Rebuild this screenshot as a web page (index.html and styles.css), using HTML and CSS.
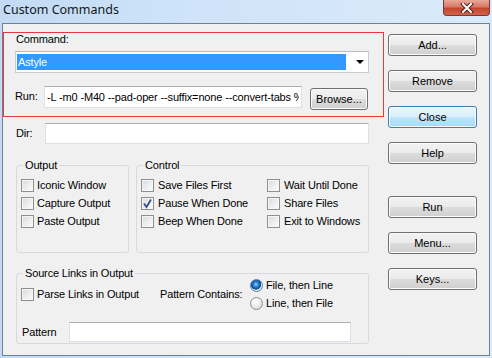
FILE: index.html
```html
<!DOCTYPE html>
<html lang="en">
<head>
    <meta charset="UTF-8">
    <title>Custom Commands</title>
    <link rel="stylesheet" href="styles.css">
</head>
<body>
    <div class="window">
        <div class="titlebar">
            <span class="title">Custom Commands</span>
            <div class="close-x">
                <svg width="16" height="10" viewBox="0 0 16 10">
                    <path d="M4 1 L12 9 M12 1 L4 9" stroke="#4a2420" stroke-width="4" stroke-linecap="square"/>
                    <path d="M4 1 L12 9 M12 1 L4 9" stroke="#ffffff" stroke-width="2" stroke-linecap="square"/>
                </svg>
            </div>
        </div>
        <div class="client">
            <div class="main">
                <div class="cmd-box">
                    <div class="label cmd-label">Command:</div>
                    <div class="combo">
                        <span class="combo-sel">Astyle</span>
                        <span class="combo-arrow"></span>
                    </div>
                    <div class="run-row">
                        <span class="label run-label">Run:</span>
                        <input class="field run-field" type="text" value="-L -m0 -M40 --pad-oper --suffix=none --convert-tabs %f">
                        <button class="btn browse">Browse...</button>
                    </div>
                </div>

                <div class="dir-row">
                    <span class="label dir-label">Dir:</span>
                    <input class="field dir-field" type="text">
                </div>

                <div class="groups">
                    <div class="group output">
                        <div class="group-title">Output</div>
                        <div class="check-list">
                            <div class="check-row"><span class="check"></span>Iconic Window</div>
                            <div class="check-row"><span class="check"></span>Capture Output</div>
                            <div class="check-row"><span class="check"></span>Paste Output</div>
                        </div>
                    </div>
                    <div class="group control">
                        <div class="group-title">Control</div>
                        <div class="check-grid">
                            <div class="check-row"><span class="check"></span>Save Files First</div>
                            <div class="check-row"><span class="check"></span>Wait Until Done</div>
                            <div class="check-row">
                                <span class="check checked">
                                    <svg width="11" height="11" viewBox="0 0 11 11"><path d="M2 5.5 L4.5 9 L9 1.5" fill="none" stroke="#3b4f8f" stroke-width="1.8"/></svg>
                                </span>Pause When Done</div>
                            <div class="check-row"><span class="check"></span>Share Files</div>
                            <div class="check-row"><span class="check"></span>Beep When Done</div>
                            <div class="check-row"><span class="check"></span>Exit to Windows</div>
                        </div>
                    </div>
                </div>

                <div class="group links">
                    <div class="group-title links-title">Source Links in Output</div>
                    <div class="links-row">
                        <div class="check-row parse"><span class="check"></span>Parse Links in Output</div>
                        <span class="label contains">Pattern Contains:</span>
                        <div class="radios">
                            <div class="radio-row"><span class="radio on"></span>File, then Line</div>
                            <div class="radio-row"><span class="radio"></span>Line, then File</div>
                        </div>
                    </div>
                    <div class="pattern-row">
                        <span class="label pattern-label">Pattern</span>
                        <input class="field pattern-field" type="text">
                    </div>
                </div>
            </div>

            <div class="buttons">
                <button class="btn side">Add...</button>
                <button class="btn side">Remove</button>
                <button class="btn side default">Close</button>
                <button class="btn side">Help</button>
                <button class="btn side run">Run</button>
                <button class="btn side">Menu...</button>
                <button class="btn side">Keys...</button>
            </div>
        </div>
    </div>
</body>
</html>
```

FILE: styles.css
```css
body {
    margin: 0;
    padding: 0;
    font-family: "Liberation Sans", Arial, sans-serif;
    font-size: 11px;
    letter-spacing: -0.15px;
    color: #000000;
}
.window {
    width: 492px;
    height: 358px;
    background: linear-gradient(90deg, #c2daf3 0%, #cfe4f9 40%, #dbeafa 100%);
    overflow: hidden;
}
.titlebar {
    height: 23px;
    display: flex;
    justify-content: space-between;
    align-items: flex-start;
}
.title {
    font-family: "Noto Sans", "Open Sans", sans-serif;
    font-size: 12.5px;
    letter-spacing: 0;
    line-height: 20px;
    padding-left: 3px;
    color: #101820;
}
.close-x {
    width: 45px;
    height: 15px;
    margin-right: 2px;
    border: 1px solid #7a3a30;
    border-top: none;
    border-radius: 0 0 4px 4px;
    background: linear-gradient(#e8a898 0%, #d77a68 45%, #c4452e 55%, #d0644c 100%);
    display: flex;
    justify-content: center;
    align-items: center;
}
.client {
    margin-left: 2px;
    width: 486px;
    height: 331px;
    border: 1px solid #6f8294;
    background-color: #f0f0f0;
    display: flex;
}
.main {
    width: 381px;
    padding-top: 8px;
}
.label {
    line-height: 13px;
    white-space: nowrap;
}
.cmd-box {
    height: 85px;
    box-sizing: border-box;
    border: 1px solid #e5393b;
    padding-bottom: 5px;
}
.cmd-label {
    padding-left: 12px;
}
.combo {
    margin: 5px 0 0 11px;
    width: 354px;
    height: 22px;
    box-sizing: border-box;
    border: 1px solid #c7cbd2;
    border-top-color: #b6bac2;
    background-color: #ffffff;
    display: flex;
    align-items: center;
    padding: 0 1px;
}
.combo-sel {
    width: 328px;
    height: 16px;
    line-height: 16px;
    background-color: #3399ff;
    color: #ffffff;
    padding-left: 1px;
}
.combo-arrow {
    margin-left: 10px;
    width: 0;
    height: 0;
    border-left: 4px solid transparent;
    border-right: 4px solid transparent;
    border-top: 4px solid #000000;
}
.run-row {
    margin-top: 13px;
    display: flex;
    align-items: flex-start;
}
.run-label {
    width: 29px;
    padding-left: 11px;
    line-height: 20px;
}
.field {
    box-sizing: border-box;
    border: 1px solid #dde1e6;
    border-top-color: #abadb3;
    background-color: #ffffff;
    font-family: "Liberation Sans", Arial, sans-serif;
    font-size: 11px;
    letter-spacing: -0.15px;
    color: #000000;
    padding: 0 2px;
    margin: 0;
    outline: none;
}
.run-field {
    width: 258px;
    height: 22px;
    padding-left: 2px;
}
.btn {
    box-sizing: border-box;
    border: 1px solid #707070;
    border-radius: 3px;
    background: linear-gradient(#f2f2f2 0%, #ebebeb 50%, #dddddd 50%, #cfcfcf 100%);
    box-shadow: inset 0 0 0 1px #fbfbfb;
    font-family: "Liberation Sans", Arial, sans-serif;
    font-size: 11px;
    color: #000000;
    padding: 0;
    margin: 0;
}
.browse {
    width: 58px;
    height: 22px;
    margin: 2px 0 0 8px;
}
.dir-row {
    margin-top: 6px;
    display: flex;
    align-items: center;
}
.dir-label {
    width: 29px;
    padding-left: 13px;
}
.dir-field {
    width: 324px;
    height: 21px;
}
.groups {
    margin: 21px 0 0 13px;
    display: flex;
    gap: 7px;
}
.group {
    box-sizing: border-box;
    border: 1px solid #d5dadf;
    border-radius: 3px;
    height: 88px;
}
.output {
    width: 113px;
}
.control {
    width: 233px;
}
.group-title {
    width: max-content;
    margin: -7px 0 0 6px;
    padding: 0 2px;
    line-height: 13px;
    background-color: #f0f0f0;
}
.check-list {
    margin-top: 4px;
    padding-left: 4px;
}
.check-grid {
    margin-top: 4px;
    padding-left: 4px;
    display: grid;
    grid-template-columns: 126px 1fr;
}
.check-row {
    height: 18px;
    display: flex;
    align-items: center;
    white-space: nowrap;
}
.check {
    width: 13px;
    height: 13px;
    box-sizing: border-box;
    border: 1px solid #8e8f8f;
    background: linear-gradient(135deg, #d8d8d8 0%, #f0f0f0 60%, #fcfcfc 100%);
    box-shadow: inset 0 0 0 1px #f6f6f6;
    margin-right: 3px;
    display: flex;
    align-items: center;
    justify-content: center;
}
.control .check {
    margin-right: 4px;
}
.links {
    margin: 20px 0 0 13px;
    width: 353px;
    height: 71px;
}
.links-title {
    margin-bottom: -4px;
}
.links-row {
    height: 36px;
    display: flex;
    align-items: center;
    padding-left: 4px;
}
.parse {
    width: 139px;
}
.contains {
    width: 90px;
}
.radio-row {
    height: 18px;
    display: flex;
    align-items: center;
    white-space: nowrap;
}
.radio {
    width: 13px;
    height: 13px;
    box-sizing: border-box;
    border-radius: 50%;
    border: 1px solid #8e8f8f;
    background: radial-gradient(circle at 40% 35%, #ffffff 0%, #e6e6e6 60%, #cfcfcf 100%);
    margin-right: 3px;
}
.radio.on {
    border-color: #5a7fa8;
    background: radial-gradient(circle at 45% 40%, #8fd0ff 0%, #1d6fc4 35%, #0f4a8a 55%, #e8eef4 62%, #d4dbe2 100%);
}
.pattern-row {
    margin-top: 10px;
    display: flex;
    align-items: center;
}
.pattern-label {
    width: 47px;
    padding-left: 5px;
}
.pattern-field {
    width: 282px;
    height: 20px;
}
.buttons {
    margin-left: 4px;
    padding-top: 10px;
    display: flex;
    flex-direction: column;
    gap: 14px;
}
.side {
    width: 89px;
    height: 22px;
}
.default {
    border-color: #3c7fb1;
    background: linear-gradient(#eaf6fd 0%, #d9f0fc 50%, #bee6fd 50%, #a7d9f5 100%);
}
.run {
    margin-top: 18px;
}
```
